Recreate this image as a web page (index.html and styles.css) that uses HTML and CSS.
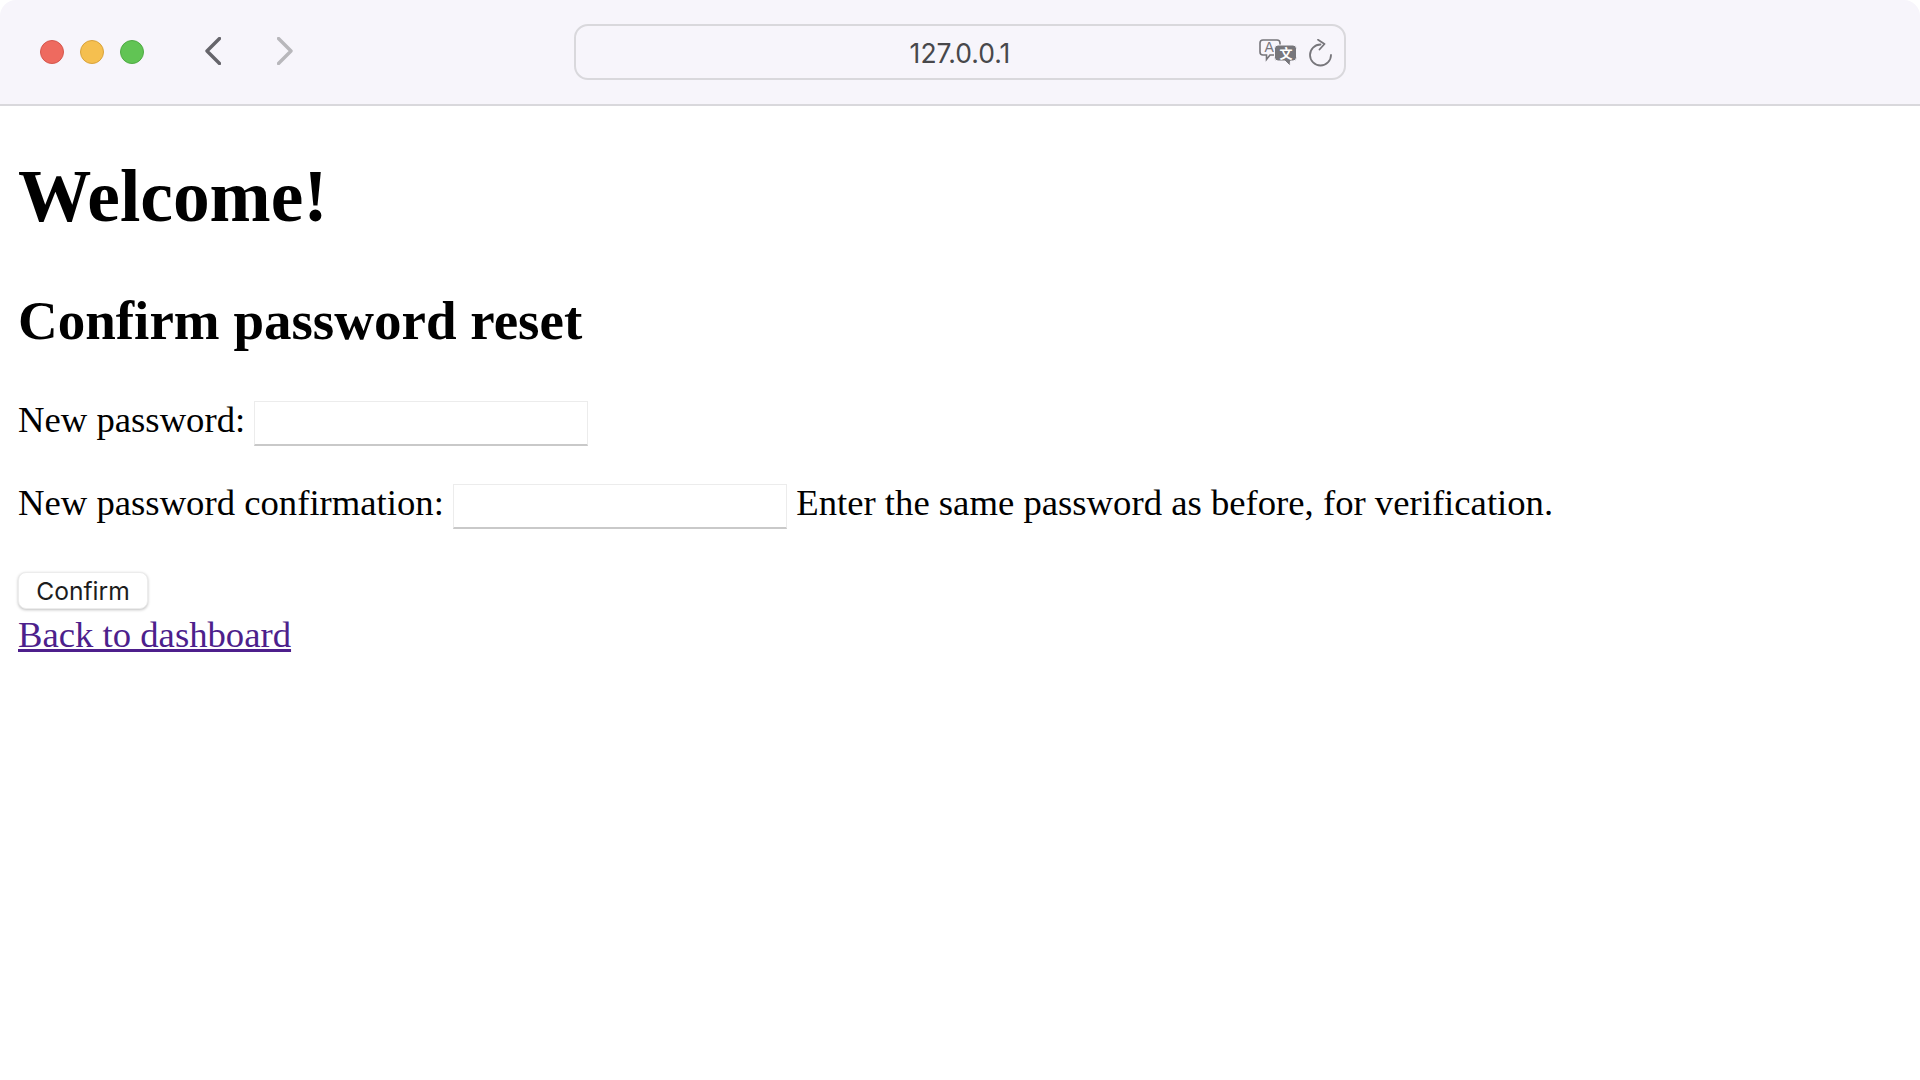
FILE: index.html
```html
<!DOCTYPE html>
<html lang="en">
<head>
  <meta charset="UTF-8">
  <title>Confirm password reset</title>
  <link rel="stylesheet" href="styles.css">
</head>
<body>
  <header class="toolbar">
    <div class="toolbar-left">
      <div class="lights">
        <span class="light light-red"></span>
        <span class="light light-yellow"></span>
        <span class="light light-green"></span>
      </div>
      <div class="nav">
        <svg width="16" height="28" viewBox="0 0 16 28"><path d="M14.500 1.500 2 14l12.500 12.500" fill="none" stroke="#66656b" stroke-width="3.400" stroke-linecap="round" stroke-linejoin="round"/></svg>
        <svg width="16" height="28" viewBox="0 0 16 28"><path d="M1.500 1.500 14 14 1.500 26.500" fill="none" stroke="#b8b7bb" stroke-width="3.400" stroke-linecap="round" stroke-linejoin="round"/></svg>
      </div>
    </div>
    <div class="urlbar">
      <span></span>
      <span class="url">127.0.0.1</span>
      <div class="url-icons">
        <svg width="38" height="28" viewBox="0 0 38 28">
          <path d="M4 1h14a3 3 0 0 1 3 3v9a3 3 0 0 1-3 3h-7l-3.500 4.500v-4.500H4a3 3 0 0 1-3-3V4a3 3 0 0 1 3-3z" fill="none" stroke="#77767b" stroke-width="1.600"/>
          <text class="icon-a" x="5.500" y="13">A</text>
          <path d="M19 6h15a3.500 3.500 0 0 1 3.500 3.500v9a3.500 3.500 0 0 1-3.500 3.500h-2.500l-.5 5-5-5H19a3.500 3.500 0 0 1-3.500-3.500v-9A3.500 3.500 0 0 1 19 6z" fill="#77767b" stroke="#f7f5fb" stroke-width="1"/>
          <text class="icon-wen" x="20.500" y="19">文</text>
        </svg>
        <svg width="24" height="28" viewBox="0 0 24 28">
          <path d="M11.500 5.500A10.500 10.500 0 1 0 22 16" fill="none" stroke="#77767b" stroke-width="1.800" stroke-linecap="round"/>
          <path d="M9 .8 15.500 5l-5 5.500" fill="none" stroke="#77767b" stroke-width="1.800" stroke-linecap="round" stroke-linejoin="round"/>
        </svg>
      </div>
    </div>
    <span></span>
  </header>

  <main class="page">
    <h1>Welcome!</h1>
    <h2>Confirm password reset</h2>
    <form>
      <p><label for="pw1">New password:</label> <input type="password" id="pw1"></p>
      <p><label for="pw2">New password confirmation:</label> <input type="password" id="pw2"> <span>Enter the same password as before, for verification.</span></p>
      <button type="button">Confirm</button>
    </form>
    <a href="#">Back to dashboard</a>
  </main>
</body>
</html>
```

FILE: styles.css
```css
body {
  margin: 0;
  background: #fff;
  color: #000;
  font-family: "Liberation Serif", "Times New Roman", serif;
  font-size: 36.7px;
}
.toolbar {
  display: grid;
  grid-template-columns: 1fr 772px 1fr;
  align-items: center;
  height: 104px;
  background: #f7f5fb;
  border-bottom: 2px solid #d9d8dc;
  border-top-left-radius: 16px;
  border-top-right-radius: 16px;
}
.toolbar-left {
  display: flex;
  align-items: center;
  padding-left: 40px;
}
.lights {
  display: flex;
  gap: 16px;
}
.light {
  width: 24px;
  height: 24px;
  border-radius: 50%;
  box-sizing: border-box;
  border: 1px solid;
}
.light-red {
  background: #ee6a5f;
  border-color: #d5574d;
}
.light-yellow {
  background: #f5bf4f;
  border-color: #d9a33c;
}
.light-green {
  background: #61c454;
  border-color: #4fab44;
}
.nav {
  display: flex;
  gap: 56px;
  margin-left: 61px;
  margin-bottom: 2px;
}
.urlbar {
  display: grid;
  grid-template-columns: 1fr auto 1fr;
  align-items: center;
  height: 56px;
  box-sizing: border-box;
  border: 2px solid #d9d8dc;
  border-radius: 14px;
}
.url {
  font-family: Inter, "Noto Sans", sans-serif;
  font-size: 26.5px;
  color: #48484b;
  padding-top: 1px;
}
.url-icons {
  display: flex;
  justify-content: flex-end;
  align-items: center;
  gap: 12px;
  padding-right: 11px;
  padding-top: 1px;
}
.icon-a {
  font-family: "Liberation Sans", sans-serif;
  font-size: 14px;
  fill: #77767b;
}
.icon-wen {
  font-family: "Noto Sans CJK SC", sans-serif;
  font-size: 13px;
  font-weight: 700;
  fill: #fff;
}
.page {
  padding: 0 18px;
}
h1 {
  font-size: 73.4px;
  margin: 46px 0 0;
  line-height: 90px;
}
h2 {
  font-size: 55px;
  margin: 43.5px 0 0;
  line-height: 70px;
}
p {
  margin: 0 0 34px;
  line-height: 45px;
}
form {
  margin-top: 41.5px;
}
input {
  width: 334px;
  height: 45px;
  box-sizing: border-box;
  vertical-align: middle;
  border: 1px solid #ececec;
  border-bottom: 2px solid #c9c9c9;
  background: #fff;
  padding: 0;
}
button {
  display: block;
  width: 130px;
  height: 37px;
  margin-top: 43px;
  padding: 0;
  background: #fff;
  border: 1px solid #ececec;
  border-radius: 8px;
  box-shadow: 0 1px 3px rgba(0,0,0,0.25);
  font-family: Inter, "Noto Sans", sans-serif;
  font-size: 24.6px;
  color: #1c1c1c;
}
a {
  display: inline-block;
  margin-top: 4px;
  color: #4d1f8c;
}
```
